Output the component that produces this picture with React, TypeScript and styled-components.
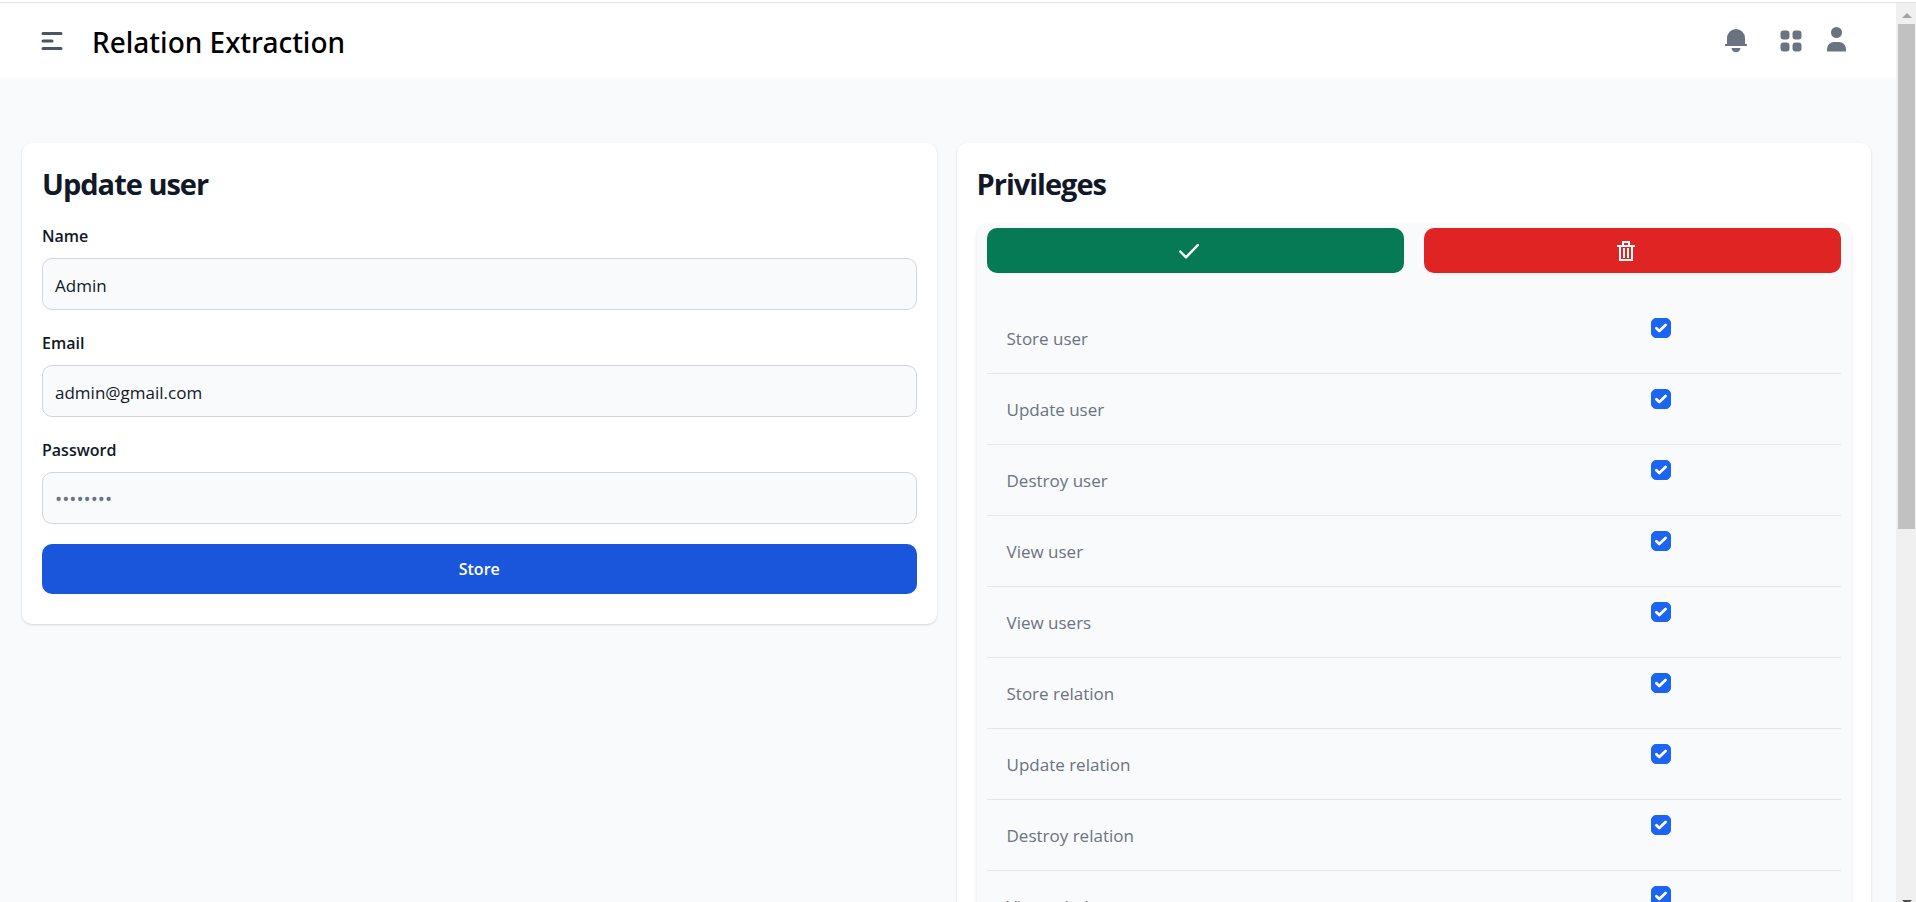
import React, { useState } from "react";
import styled, { createGlobalStyle } from "styled-components";

const Global = createGlobalStyle`
  *, *::before, *::after { box-sizing: border-box; }
  body {
    margin: 0;
    background: #f9fafb;
    color: #111827;
    font-family: "Segoe UI", "Open Sans", "Noto Sans", sans-serif;
    font-size: 17px;
    line-height: 25px;
  }
  button, input { font: inherit; }
`;

const Frame = styled.div`
  display: flex;
  height: 100vh;
  overflow: hidden;
  border-top: 2px solid #ffffff;
`;

const Viewport = styled.div`
  flex: 1;
  min-width: 0;
  overflow-y: auto;
  scrollbar-width: none;
  border-top: 1px solid #dfe1e5;
`;

const Header = styled.header`
  display: flex;
  align-items: center;
  height: 75px;
  padding: 0 50px 0 37px;
  background: #ffffff;
`;

const IconButton = styled.button<{ $tone?: string; $trail?: number }>`
  display: flex;
  padding: 0 ${(p) => p.$trail ?? 0}px 0 0;
  border: 0;
  background: none;
  color: ${(p) => p.$tone ?? "#6b7280"};
  cursor: pointer;
`;

const Brand = styled.span`
  margin-left: 25px;
  padding-top: 2px;
  color: #000000;
  font-family: "Segoe UI", "Noto Sans", "Open Sans", sans-serif;
  font-size: 28px;
  font-weight: 500;
  line-height: 40px;
`;

const HeaderActions = styled.nav`
  display: flex;
  align-items: center;
  gap: 20px;
  margin-left: auto;
`;

const Main = styled.main`
  display: grid;
  grid-template-columns: 1fr 1fr;
  align-items: start;
  gap: 20px;
  padding: 65px 25px 25px 22px;
`;

const Card = styled.section`
  padding: 20px 20px 30px;
  border-radius: 10px;
  background: #ffffff;
  box-shadow: 0 1px 3px rgba(0, 0, 0, 0.1), 0 1px 2px rgba(0, 0, 0, 0.06);
`;

const CardTitle = styled.h1`
  margin: 0 0 19px;
  padding-top: 1px;
  font-size: 29px;
  font-weight: 700;
  line-height: 40px;
  letter-spacing: -1px;
`;

const Form = styled.form`
  display: grid;
  gap: 20px;
`;

const Field = styled.div`
  display: grid;
  gap: 9px;
`;

const FieldLabel = styled.label`
  padding-top: 1px;
  font-size: 16px;
  font-weight: 600;
`;

const TextInput = styled.input`
  width: 100%;
  height: 52px;
  padding: 2px 12px 0;
  border: 1px solid #d1d5db;
  border-radius: 10px;
  background: #f9fafb;
  color: #111827;
  &::placeholder { color: #6b7280; opacity: 1; font-size: 19px; }
`;

const SolidButton = styled.button<{ $tone: string; $height: number }>`
  display: flex;
  align-items: center;
  justify-content: center;
  width: 100%;
  height: ${(p) => p.$height}px;
  padding: 1px 0 0;
  border: 0;
  border-radius: 10px;
  background: ${(p) => p.$tone};
  color: #ffffff;
  font-size: 16px;
  font-weight: 600;
  cursor: pointer;
  svg { margin-right: 12px; }
`;

const Panel = styled.div`
  padding: 5px 10px;
  border-radius: 10px;
  background: #f9fafb;
  box-shadow: 0 4px 6px rgba(0, 0, 0, 0.06), 0 2px 4px rgba(0, 0, 0, 0.04);
`;

const PanelActions = styled.div`
  display: grid;
  grid-template-columns: 1fr 1fr;
  gap: 20px;
  margin-bottom: 30px;
`;

const PrivilegeTable = styled.table`
  width: 100%;
  border-collapse: separate;
  border-spacing: 0;
  color: #6b7280;
`;

const NameCell = styled.td`
  height: 71px;
  padding: 0 20px;
  border-bottom: 1px solid #e5e7eb;
`;

const CheckCell = styled.td`
  width: 42%;
  padding: 15px 2px 0 0;
  border-bottom: 1px solid #e5e7eb;
  vertical-align: top;
`;

const CheckSlot = styled.div`
  display: flex;
  justify-content: center;
`;

const CheckBox = styled.input`
  appearance: none;
  width: 20px;
  height: 20px;
  margin: 0;
  border: 1px solid #d1d5db;
  border-radius: 5px;
  background: #f3f4f6;
  &:checked {
    border-color: #1c64f2;
    background: #1c64f2 url("data:image/svg+xml,%3Csvg xmlns='http://www.w3.org/2000/svg' viewBox='0 0 16 12' fill='none' stroke='white' stroke-width='3.6' stroke-linecap='round' stroke-linejoin='round'%3E%3Cpath d='M1.900 6.300 5.700 10 14.100 1.900'/%3E%3C/svg%3E") center / 12px 12px no-repeat;
  }
`;

const ScrollTrack = styled.div`
  display: flex;
  flex-direction: column;
  align-items: center;
  gap: 6px;
  width: 20px;
  padding: 10px 1px 0 2px;
  border-top: 1px solid #dfe1e5;
  background: #f0f0f0;
  svg { flex-shrink: 0; }
`;

const ScrollLane = styled.div`
  display: grid;
  flex: 1;
  grid-template-rows: 29fr 21fr;
  width: 100%;
`;

const ScrollThumb = styled.div`
  background: #c1c1c1;
`;

const MenuIcon = () => (
  <svg width="30" height="30" viewBox="0 0 20 20" fill="currentColor" aria-hidden="true">
    <path fillRule="evenodd" clipRule="evenodd" d="M3 5a1 1 0 011-1h12a1 1 0 110 2H4a1 1 0 01-1-1zM3 10a1 1 0 011-1h6a1 1 0 110 2H4a1 1 0 01-1-1zM3 15a1 1 0 011-1h12a1 1 0 110 2H4a1 1 0 01-1-1z" />
  </svg>
);

const BellIcon = () => (
  <svg width="22" height="25" viewBox="0 0 22 25" fill="currentColor" aria-hidden="true">
    <path d="M2 16V10a9 9 0 0 1 18 0v6h.5a1 1 0 0 1 1 2H.5a1 1 0 0 1 0-2z" />
    <path d="M6.500 20h9a4.500 4.200 0 0 1-9 0z" />
  </svg>
);

const AppsIcon = () => (
  <svg width="30" height="30" viewBox="0 0 20 20" fill="currentColor" aria-hidden="true">
    <path d="M5 3a2 2 0 00-2 2v2a2 2 0 002 2h2a2 2 0 002-2V5a2 2 0 00-2-2H5zM5 11a2 2 0 00-2 2v2a2 2 0 002 2h2a2 2 0 002-2v-2a2 2 0 00-2-2H5zM11 5a2 2 0 012-2h2a2 2 0 012 2v2a2 2 0 01-2 2h-2a2 2 0 01-2-2V5zM11 13a2 2 0 012-2h2a2 2 0 012 2v2a2 2 0 01-2 2h-2a2 2 0 01-2-2v-2z" />
  </svg>
);

const UserIcon = () => (
  <svg width="20" height="27" viewBox="-1 0 20 27" fill="currentColor" aria-hidden="true">
    <circle cx="9.500" cy="5.500" r="5.500" />
    <path d="M0 24.500V22a7 7 0 0 1 7-7h5a7 7 0 0 1 7 7v2.500z" />
  </svg>
);

const CheckIcon = () => (
  <svg width="20" height="15" viewBox="0 0 20 15" fill="none" stroke="currentColor" strokeWidth="2.4" strokeLinecap="round" strokeLinejoin="round" aria-hidden="true">
    <path d="M1.200 7.500 7 13.300 18.800 1.200" />
  </svg>
);

const TrashIcon = () => (
  <svg width="18" height="20" viewBox="0 0 18 20" fill="none" stroke="currentColor" strokeWidth="2" aria-hidden="true">
    <path d="M0 5h18M6 5V1h6v4M3 5v14h12V5M7 7v10M11 7v10" />
  </svg>
);

const ArrowIcon = ({ down = false }: { down?: boolean }) => (
  <svg width="10" height={down ? 2 : 5} viewBox={down ? "0 0 10 2" : "0 0 10 5"} aria-hidden="true">
    {down ? <path d="M0 0h10L5 5z" fill="#505050" /> : <path d="M0 5h10L5 0z" fill="#a3a3a3" />}
  </svg>
);

const initialPrivileges = [
  "Store user",
  "Update user",
  "Destroy user",
  "View user",
  "View users",
  "Store relation",
  "Update relation",
  "Destroy relation",
  "View relation",
];

export default function App() {
  const [granted, setGranted] = useState(() => initialPrivileges.map(() => true));
  const setAll = (value: boolean) => setGranted(initialPrivileges.map(() => value));
  const toggle = (index: number) => setGranted((list) => list.map((v, i) => (i === index ? !v : v)));

  return (
    <>
      <Global />
      <Frame>
        <Viewport>
          <Header>
            <IconButton $tone="#4b5563" aria-label="Toggle menu"><MenuIcon /></IconButton>
            <Brand>Relation Extraction</Brand>
            <HeaderActions aria-label="Account">
              <IconButton $trail={9} aria-label="Notifications"><BellIcon /></IconButton>
              <IconButton aria-label="Apps"><AppsIcon /></IconButton>
              <IconButton aria-label="Profile"><UserIcon /></IconButton>
            </HeaderActions>
          </Header>
          <Main>
            <Card>
              <CardTitle>Update user</CardTitle>
              <Form onSubmit={(e) => e.preventDefault()}>
                <Field>
                  <FieldLabel htmlFor="name">Name</FieldLabel>
                  <TextInput id="name" type="text" defaultValue="Admin" />
                </Field>
                <Field>
                  <FieldLabel htmlFor="email">Email</FieldLabel>
                  <TextInput id="email" type="email" defaultValue="admin@gmail.com" />
                </Field>
                <Field>
                  <FieldLabel htmlFor="password">Password</FieldLabel>
                  <TextInput id="password" type="password" placeholder="••••••••" />
                </Field>
                <SolidButton type="submit" $tone="#1a56db" $height={50}>Store</SolidButton>
              </Form>
            </Card>
            <Card>
              <CardTitle as="h2">Privileges</CardTitle>
              <Panel>
                <PanelActions>
                  <SolidButton type="button" $tone="#057a55" $height={45} aria-label="Grant all" onClick={() => setAll(true)}><CheckIcon /></SolidButton>
                  <SolidButton type="button" $tone="#e02424" $height={45} aria-label="Revoke all" onClick={() => setAll(false)}><TrashIcon /></SolidButton>
                </PanelActions>
                <PrivilegeTable>
                  <tbody>
                    {initialPrivileges.map((name, i) => (
                      <tr key={name}>
                        <NameCell><label htmlFor={`privilege-${i}`}>{name}</label></NameCell>
                        <CheckCell>
                          <CheckSlot>
                            <CheckBox id={`privilege-${i}`} type="checkbox" checked={granted[i]} onChange={() => toggle(i)} />
                          </CheckSlot>
                        </CheckCell>
                      </tr>
                    ))}
                  </tbody>
                </PrivilegeTable>
              </Panel>
            </Card>
          </Main>
        </Viewport>
        <ScrollTrack aria-hidden="true">
          <ArrowIcon />
          <ScrollLane>
            <ScrollThumb />
          </ScrollLane>
          <ArrowIcon down />
        </ScrollTrack>
      </Frame>
    </>
  );
}
